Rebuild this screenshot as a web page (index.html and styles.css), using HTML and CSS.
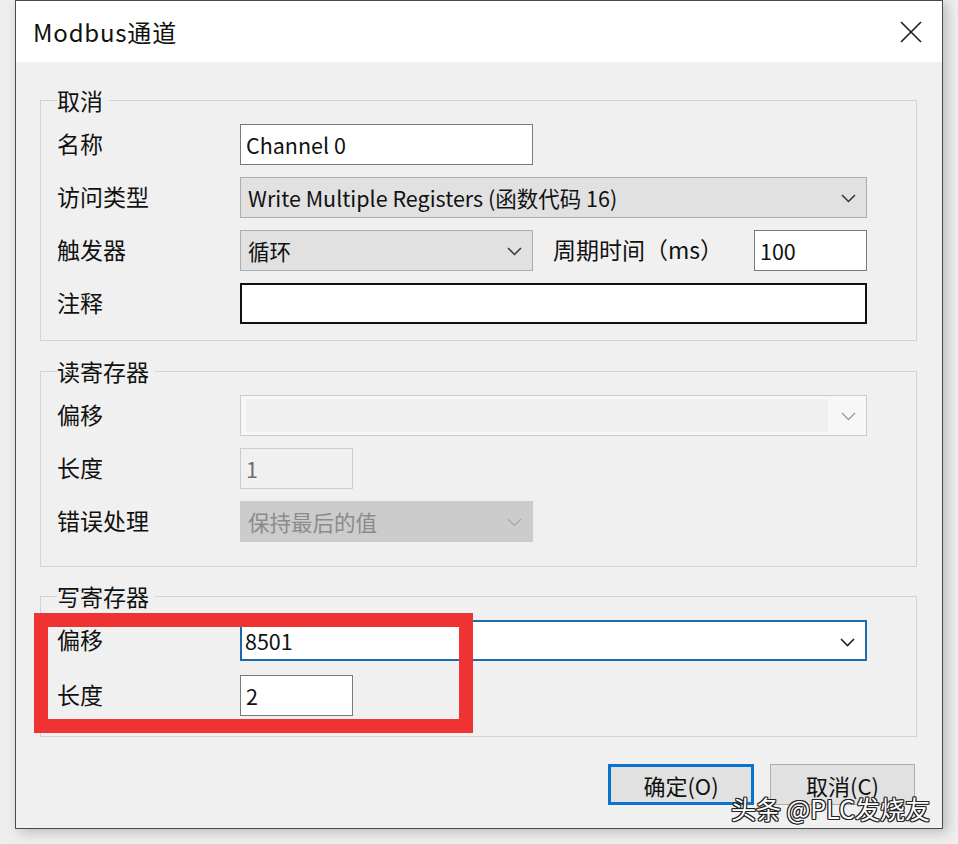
FILE: index.html
```html
<!DOCTYPE html>
<html lang="zh-CN">
<head>
<meta charset="utf-8">
<title>Modbus通道</title>
<link rel="stylesheet" href="styles.css">
</head>
<body>
<div class="dialog">
  <div class="titlebar">
    <span class="title">Modbus通道</span>
    <svg class="close" width="22" height="22" viewBox="0 0 22 22"><path d="M1 1 L21 21 M21 1 L1 21" stroke="#1a1a1a" stroke-width="1.6" fill="none"/></svg>
  </div>
  <div class="content">
    <fieldset class="group g1">
      <legend>取消</legend>
      <div class="grid">
        <span class="lbl">名称</span>
        <div class="ctl input c-mid">Channel 0</div>

        <span class="lbl">访问类型</span>
        <div class="ctl select span-all">Write Multiple Registers (函数代码 16)<svg class="chev" width="15" height="9" viewBox="0 0 15 9"><polyline points="1,1 7.5,7.5 14,1" fill="none" stroke="#333" stroke-width="1.5"/></svg></div>

        <span class="lbl">触发器</span>
        <div class="ctl select c-mid">循环<svg class="chev" width="15" height="9" viewBox="0 0 15 9"><polyline points="1,1 7.5,7.5 14,1" fill="none" stroke="#333" stroke-width="1.5"/></svg></div>
        <span class="lbl lbl2">周期时间（ms）</span>
        <div class="ctl input c-last">100</div>

        <span class="lbl">注释</span>
        <div class="ctl input thick span-all"></div>
      </div>
    </fieldset>

    <fieldset class="group g2">
      <legend>读寄存器</legend>
      <div class="grid">
        <span class="lbl">偏移</span>
        <div class="ctl select disabled-light span-all"><span class="fill"></span><svg class="chev" width="15" height="9" viewBox="0 0 15 9"><polyline points="1,1 7.5,7.5 14,1" fill="none" stroke="#9a9a9a" stroke-width="1.3"/></svg></div>

        <span class="lbl">长度</span>
        <div class="ctl input short disabled-input">1</div>

        <span class="lbl">错误处理</span>
        <div class="ctl select disabled-dark c-mid">保持最后的值<svg class="chev" width="15" height="9" viewBox="0 0 15 9"><polyline points="1,1 7.5,7.5 14,1" fill="none" stroke="#a8a8a8" stroke-width="1.3"/></svg></div>
      </div>
    </fieldset>

    <fieldset class="group g3">
      <legend>写寄存器</legend>
      <div class="grid grid-wide">
        <span class="lbl">偏移</span>
        <div class="ctl select focused span-all">8501<svg class="chev" width="15" height="9" viewBox="0 0 15 9"><polyline points="1,1 7.5,7.5 14,1" fill="none" stroke="#222" stroke-width="1.6"/></svg></div>

        <span class="lbl">长度</span>
        <div class="ctl input short">2</div>
      </div>
    </fieldset>

    <div class="buttons">
      <div class="btn primary">确定(O)</div>
      <div class="btn">取消(C)</div>
    </div>
  </div>
</div>
<div class="redbox"></div>
<div class="watermark">头条 @PLC发烧友</div>
</body>
</html>
```
FILE: styles.css
```css
html, body {
  margin: 0;
  padding: 0;
}
body {
  position: relative;
  width: 958px;
  height: 844px;
  overflow: hidden;
  background: #eeeeee;
  font-family: "Noto Sans CJK SC", "Noto Sans", sans-serif;
  color: #111;
}
.dialog {
  margin-left: 15px;
  width: 928px;
  height: 829px;
  box-sizing: border-box;
  border: 1px solid #4a4a4a;
  background: #f0f0f0;
  box-shadow: 4px 3px 12px rgba(0, 0, 0, 0.22);
  display: flex;
  flex-direction: column;
}
.titlebar {
  height: 61px;
  background: #ffffff;
  display: flex;
  align-items: center;
  justify-content: space-between;
  padding: 0 20px 0 17px;
}
.title {
  font-size: 24px;
  letter-spacing: 0.8px;
  line-height: 30px;
  color: #111;
}
.close {
  display: block;
}
.content {
  flex: 1;
  padding: 23px 25px 0 24px;
  display: flex;
  flex-direction: column;
}
.group {
  margin: 0;
  border: 1px solid #d3d3d3;
  padding: 9px 0 16px 16px;
  min-inline-size: 0;
}
.group legend {
  padding: 0 6px 0 0;
  font-size: 23px;
  line-height: 30px;
  color: #111;
}
.g1 { margin-bottom: 15px; }
.g2 { padding-bottom: 24px; margin-bottom: 14px; }
.g3 { padding-bottom: 20px; }
.grid {
  display: grid;
  grid-template-columns: 183px 293px 221px 113px;
  row-gap: 12px;
  align-items: center;
}
.grid-wide { row-gap: 14px; }
.lbl {
  grid-column: 1;
  font-size: 23px;
  line-height: 30px;
  color: #111;
  white-space: nowrap;
  margin-top: -3px;
}
.lbl2 {
  grid-column: 3;
  padding-left: 20px;
}
.ctl {
  box-sizing: border-box;
  height: 41px;
  display: flex;
  align-items: center;
  font-size: 21.5px;
  line-height: 28px;
  white-space: nowrap;
  position: relative;
}
.input {
  background: #ffffff;
  border: 1px solid #7a7a7a;
  padding: 0 5px;
}
.input.thick {
  border: 2px solid #111;
}
.input.short {
  grid-column: 2;
  width: 113px;
}
.c-mid { grid-column: 2; }
.c-last { grid-column: 4; }
.span-all { grid-column: 2 / 5; }
.select {
  background: #e1e1e1;
  border: 1px solid #adadad;
  padding: 0 40px 0 7px;
}
.chev {
  position: absolute;
  right: 10px;
  top: 16px;
}
.select.disabled-light {
  background: #f7f7f7;
  border-color: #cccccc;
}
.select.disabled-light .fill {
  position: absolute;
  left: 5px;
  top: 3px;
  bottom: 3px;
  right: 38px;
  background: #f0f0f0;
}
.select.disabled-dark {
  background: #cccccc;
  border-color: #cccccc;
  color: #8b8b8b;
}
.input.disabled-input {
  background: #f0f0f0;
  border-color: #cccccc;
  color: #6d6d6d;
}
.select.focused {
  background: #ffffff;
  border: 2px solid #1f6aa8;
  padding-left: 3px;
}
.buttons {
  display: flex;
  justify-content: flex-end;
  gap: 16px;
  margin-top: 27px;
  padding-right: 2px;
}
.btn {
  box-sizing: border-box;
  width: 145px;
  height: 41px;
  background: #e1e1e1;
  border: 1px solid #adadad;
  display: flex;
  align-items: center;
  justify-content: center;
  font-size: 22px;
  line-height: 28px;
  color: #111;
}
.btn.primary {
  width: 146px;
  border: 3px solid #0a73cf;
}
.redbox {
  position: absolute;
  left: 34px;
  top: 613px;
  width: 439px;
  height: 120px;
  box-sizing: border-box;
  border: 14px solid #ef3232;
}
.watermark {
  position: absolute;
  left: 731px;
  top: 793px;
  font-size: 25px;
  line-height: 30px;
  color: #ffffff;
  white-space: nowrap;
  text-shadow: 1px 0 0 #222, -1px 0 0 #222, 0 1px 0 #222, 0 -1px 0 #222, 1px 1px 0 #222, -1px -1px 0 #222, 1px -1px 0 #222, -1px 1px 0 #222;
}
```
